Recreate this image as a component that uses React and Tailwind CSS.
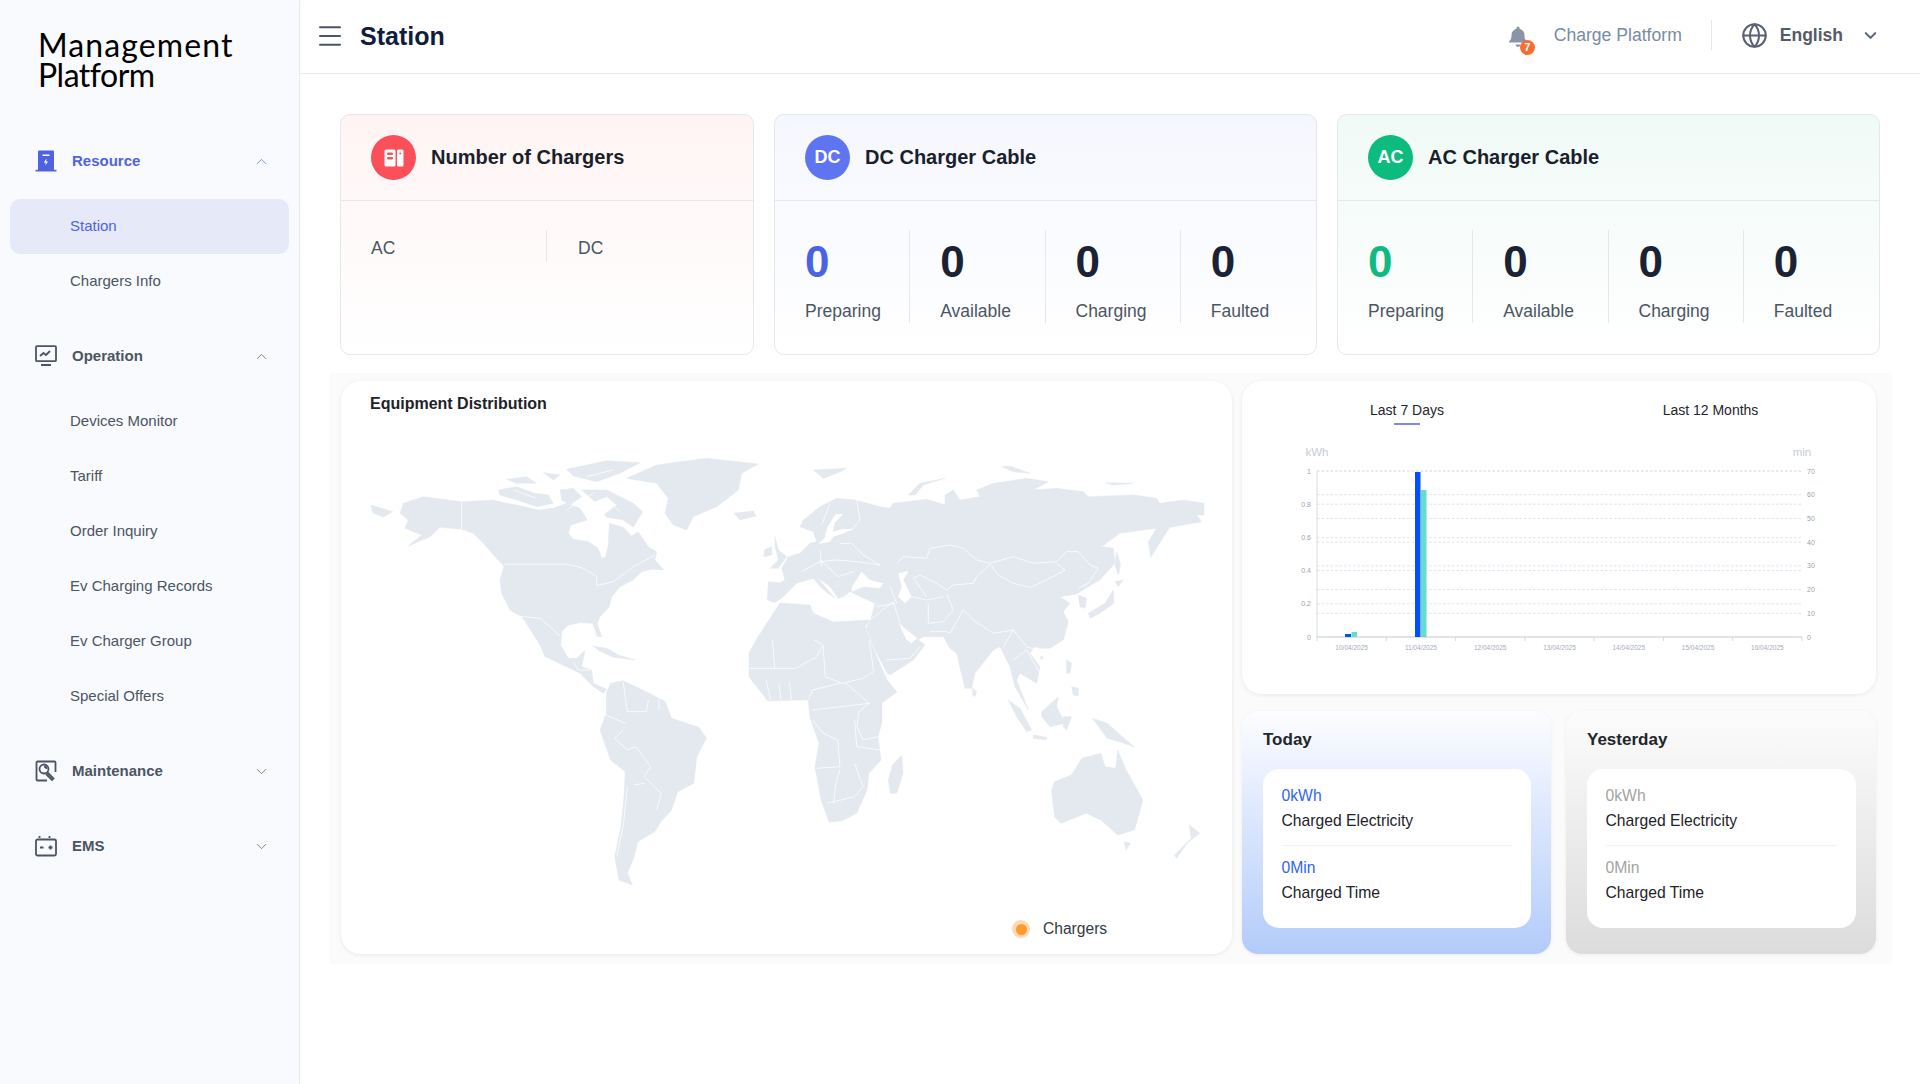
import React from 'react';
import { ChevronUp, ChevronDown, Globe, Menu } from 'lucide-react';

const sans = "font-['Liberation_Sans',Arial,sans-serif]";

const ResourceIcon = () => (
  <svg width="22" height="22" viewBox="0 0 22 22">
    <path d="M3 1.5a1 1 0 0 1 1-1h14a1 1 0 0 1 1 1V20H3z" fill="#4f62e0" />
    <rect x="0.5" y="19.8" width="21" height="1.7" fill="#4f62e0" />
    <rect x="7.5" y="4.5" width="7" height="1.5" fill="#fff" />
    <path d="M11.6 8.5 8.8 12.6h2l-.6 3 2.9-4.2h-2z" fill="#fff" />
  </svg>
);

const OperationIcon = () => (
  <svg width="22" height="22" viewBox="0 0 22 22" fill="none" stroke="#4b5563" strokeWidth="1.8">
    <rect x="1" y="1.2" width="20" height="15" rx="1" />
    <path d="M5 11l3.5-3 2.5 2 4-4" />
    <path d="M6 20h10" strokeWidth="2" />
  </svg>
);

const MaintenanceIcon = () => (
  <svg width="22" height="22" viewBox="0 0 22 22" fill="none" stroke="#4b5563" strokeWidth="1.8">
    <path d="M12 20.5H2.5a1 1 0 0 1-1-1v-17a1 1 0 0 1 1-1h17a1 1 0 0 1 1 1V12" />
    <circle cx="9" cy="9" r="4.5" />
    <path d="M9 6.5a2.5 2.5 0 0 1 2.5 2.5M12.5 12.5l6 6-1.5 1.5-6-6" />
  </svg>
);

const EmsIcon = () => (
  <svg width="22" height="22" viewBox="0 0 22 22" fill="none" stroke="#4b5563" strokeWidth="1.8">
    <rect x="1" y="4.5" width="20" height="16" rx="1.5" />
    <path d="M4.5 1v2M14.5 1v2M5 12.5h3.5M13.5 12.5h4M15.5 10.5v4" />
  </svg>
);

const menu = [
  {
    title: 'Resource',
    Icon: ResourceIcon,
    open: true,
    active: true,
    items: ['Station', 'Chargers Info'],
  },
  {
    title: 'Operation',
    Icon: OperationIcon,
    open: true,
    items: ['Devices Monitor', 'Tariff', 'Order Inquiry', 'Ev Charging Records', 'Ev Charger Group', 'Special Offers'],
  },
  { title: 'Maintenance', Icon: MaintenanceIcon, items: [] },
  { title: 'EMS', Icon: EmsIcon, items: [] },
];

const Sidebar = () => (
  <aside className="w-[300px] shrink-0 bg-[#f9fafd] border-r border-[#ececf0] shadow-[1px_0_2px_rgba(0,0,0,0.03)]">
    <div className="h-[136px] pt-[30px] pl-[38px] font-['Lato',sans-serif] text-[32px] leading-[30px] text-black">
      <div className="tracking-[1.1px]">Management</div>
      <div className="tracking-[-0.5px]">Platform</div>
    </div>
    {menu.map(({ title, Icon, open, active, items }) => (
      <div key={title} className={items.length > 0 ? 'mb-[22px]' : 'mb-[25px]'}>
        <div className="h-[50px] flex items-center pl-[35px] pr-[29px]">
          <Icon />
          <span className={`ml-[15px] flex-1 text-[15px] font-bold ${active ? 'text-[#4f62e0]' : 'text-[#4b5563]'}`}>
            {title}
          </span>
          {open ? (
            <ChevronUp size={17} strokeWidth={1} className={active ? 'text-[#4f62e0]' : 'text-[#4b5563]'} />
          ) : (
            <ChevronDown size={17} strokeWidth={1} className="text-[#4b5563]" />
          )}
        </div>
        {items.length > 0 && (
          <div className="mt-[13px] mx-[10px]">
            {items.map((item) => (
              <div
                key={item}
                className={`h-[55px] flex items-center pl-[60px] rounded-[10px] text-[15px] ${
                  item === 'Station' ? 'bg-[#e6e9f8] text-[#4f62e0]' : 'text-[#4b5563]'
                }`}
              >
                {item}
              </div>
            ))}
          </div>
        )}
      </div>
    ))}
  </aside>
);

const Header = () => (
  <header className="h-[74px] border-b border-[#e5e7eb] flex items-center pl-[15px] pr-[40px]">
    <Menu size={30} strokeWidth={1.6} className="mb-[2px] text-[#4b5563]" />
    <h1 className="ml-[15px] text-[25px] font-bold text-[#101c3d]">Station</h1>
    <div className="ml-auto relative">
      <svg width="20" height="22" viewBox="0 0 20 22" fill="#8a94a6">
        <path d="M10 0.5a1.6 1.6 0 0 1 1.6 1.6v.6c3.2.8 4.9 3.4 4.9 6.6 0 3.4.8 4.8 2.5 6.2v1H1v-1c1.7-1.4 2.5-2.8 2.5-6.2 0-3.2 1.7-5.8 4.9-6.6v-.6A1.6 1.6 0 0 1 10 .5zM7.6 18.5h4.8a2.4 2.4 0 0 1-4.8 0z" />
      </svg>
      <span className="absolute left-[12px] top-[14px] w-[15px] h-[15px] rounded-full bg-[#f56f33] text-white text-[11px] font-bold leading-[15px] text-center">
        7
      </span>
    </div>
    <span className="ml-[26px] mb-[2px] text-[17.6px] text-[#7a8ba3]">Charge Platform</span>
    <div className="ml-[29px] mb-[3px] w-px h-[30px] bg-[#e5e7eb]" />
    <Globe size={27} strokeWidth={1.8} className="ml-[29px] mb-[3px] text-[#566274]" />
    <span className="ml-[12px] mb-[3px] text-[17.5px] font-bold text-[#555b66]">English</span>
    <ChevronDown size={19} strokeWidth={2.6} className="ml-[18px] mb-[3px] text-[#566274]" />
  </header>
);

const Stat = ({ label, color, last }) => (
  <div className={`pl-[30px] h-[93px] ${last ? '' : 'border-r border-[#e5e7eb]'}`}>
    <div className={`text-[44px] font-bold leading-[44px] mt-[10px] ${color}`}>0</div>
    <div className="mt-[17px] text-[17.5px] leading-[20px] text-[#4b5563]">{label}</div>
  </div>
);

const CableCard = ({ title, badge, badgeColor, gradient, color }) => (
  <div className={`rounded-[10px] border border-[#e5e7eb] ${gradient}`}>
    <div className="h-[86px] border-b border-[#e5e7eb] flex items-center pl-[30px]">
      <div className={`w-[45px] h-[45px] rounded-full flex items-center justify-center text-white font-bold text-[18px] ${badgeColor}`}>
        {badge}
      </div>
      <span className="ml-[15px] mb-[2px] text-[20px] font-bold text-[#1a1f2b]">{title}</span>
    </div>
    <div className="grid grid-cols-4 mt-[29px]">
      <Stat label="Preparing" color={color} />
      <Stat label="Available" color="text-[#1a2233]" />
      <Stat label="Charging" color="text-[#1a2233]" />
      <Stat label="Faulted" color="text-[#1a2233]" last />
    </div>
  </div>
);

// land shapes, traced in three local frames that line up with the map area
const Land = ({ d }) => <path d={d} fill="#e3e9ef" stroke="#e3e9ef" strokeWidth="0.5" vectorEffect="non-scaling-stroke" />;
const Gap = ({ d }) => <path d={d} fill="#fff" />;
const Line = ({ d }) => (
  <path d={d} fill="none" stroke="#fff" strokeWidth="0.9" strokeOpacity="0.85" strokeLinejoin="round" vectorEffect="non-scaling-stroke" />
);

const WorldMap = () => (
  <svg viewBox="341 440 891 460" className="block w-[891px] h-[460px]">
    <g transform="translate(340 440) scale(0.3333)">
      <Land d="M92 195 L125 205 L158 215 L130 232 L98 218 Z" />
      <Land d="M190 190 L250 170 L365 185 L460 180 L500 190 L545 198 L595 210 L640 205 L680 190 L720 205 L742 240 L692 255 L685 280 L700 298 L745 305 L775 325 L785 355 L797 350 L805 315 L808 250 L850 262 L875 288 L895 275 L925 320 L950 335 L945 360 L972 390 L935 388 L905 395 L880 420 L840 440 L815 470 L808 500 L780 530 L772 550 L785 590 L772 590 L758 550 L720 548 L685 555 L665 575 L662 615 L685 655 L710 655 L735 632 L725 680 L755 690 L760 730 L800 748 L790 760 L760 740 L720 700 L680 680 L615 650 L600 615 L575 575 L545 530 L510 510 L485 460 L480 420 L492 378 L465 350 L430 310 L400 280 L365 268 L300 262 L270 290 L205 318 L245 285 L195 265 L205 240 L180 220 Z" />
      <Land d="M475 150 L530 140 L585 160 L625 165 L640 190 L590 200 L530 180 L480 165 Z" />
      <Land d="M660 150 L700 145 L725 170 L690 195 L665 180 Z" />
      <Land d="M725 150 L800 150 L880 190 L908 215 L880 262 L850 240 L800 232 L770 190 Z" />
      <Land d="M680 88 L800 62 L900 68 L840 100 L770 125 L700 108 Z" />
      <Land d="M500 118 L560 110 L590 130 L530 130 Z" />
      <Land d="M610 98 L660 105 L640 120 Z" />
      <Land d="M860 115 L950 75 L1100 55 L1255 72 L1205 100 L1195 150 L1130 200 L1060 230 L1040 270 L1000 255 L975 220 L985 175 L950 130 Z" />
      <Land d="M1182 220 L1240 213 L1248 228 L1200 240 Z" />
      <Land d="M758 618 L800 625 L835 645 L885 660 L820 652 L780 634 Z" />
      <Gap d="M543 530 L555 545 L582 615 L570 600 L548 560 Z" />
      <Gap d="M540 130 L600 135 L640 150 M740 195 L800 170 L830 195 L790 225 L760 210 Z" />
      <Line d="M543 530 L560 580 L585 618" />
      <Line d="M365 185 L365 268" />
      <Line d="M492 373 L685 373 L730 385 L770 410 L770 437 L820 425 L880 380 L945 345" />
      <Line d="M535 528 L600 535 L630 560 L660 588" />
      <Line d="M700 665 L715 690 L750 690" />
      <Line d="M520 150 L590 175 M680 210 L760 160 M800 180 L840 215 M740 110 L820 90" />
    </g>
    <g transform="translate(780 440) scale(0.3333)">
      <Land d="M-15 488 L-38 480 L-35 425 L0 428 L15 420 L5 385 L25 350 L60 340 L90 310 L110 305 L100 275 L60 260 L70 240 L120 200 L170 175 L225 180 L300 200 L330 205 L340 190 L440 178 L495 195 L495 165 L520 150 L540 180 L600 170 L590 150 L640 130 L740 115 L805 125 L760 150 L830 145 L910 155 L925 170 L1060 165 L1130 175 L1140 190 L1210 180 L1272 190 L1272 225 L1250 225 L1265 245 L1170 262 L1145 300 L1112 352 L1105 305 L1130 265 L1090 270 L1020 280 L965 320 L1000 325 L1005 370 L960 420 L925 440 L890 462 L840 470 L870 490 L850 515 L865 545 L850 600 L810 625 L780 625 L765 620 L750 640 L780 680 L770 730 L745 715 L720 700 L710 720 L745 810 L705 740 L690 680 L660 620 L640 630 L585 700 L575 745 L555 745 L530 640 L510 625 L490 590 L430 590 L415 600 L435 615 L400 660 L330 705 L322 700 L290 640 L258 565 L272 540 L285 490 L210 455 L190 470 L175 475 L150 440 L110 410 L165 475 L125 445 L100 415 L50 430 L10 470 Z" />
      <Gap d="M168 222 L190 222 L165 248 L158 275 L185 268 L222 266 L190 280 L160 290 L150 305 L115 312 L135 292 L143 258 Z" />
      <Gap d="M215 442 L245 395 L270 420 L310 430 L300 445 L250 440 L215 455 Z" />
      <Gap d="M355 400 L385 393 L370 420 L395 470 L375 490 L355 470 L365 440 Z" />
      <Gap d="M358 550 L380 570 L412 595 L395 610 L380 600 L365 570 Z" />
      <Land d="M-15 290 L-5 330 L20 350 L-5 385 L-30 385 L-5 360 L-15 320 Z" />
      <Land d="M-47 330 L-25 320 L-25 345 L-48 350 Z" />
      <Land d="M100 90 L200 85 L170 100 L130 115 Z" />
      <Land d="M385 165 L420 130 L495 115 L430 135 L405 165 Z" />
      <Land d="M665 80 L690 78 L750 100 L700 95 Z" />
      <Land d="M975 128 L1060 130 L1000 135 Z" />
      <Land d="M1010 335 L1022 375 L1015 405 L1005 375 Z" />
      <Land d="M1005 425 L1030 420 L1015 440 Z" />
      <Land d="M1000 450 L1002 490 L960 520 L930 535 L925 520 L975 490 Z" />
      <Land d="M895 465 L920 475 L915 505 L900 500 Z" />
      <Land d="M780 650 L790 650 L785 660 Z" />
      <Land d="M578 745 L590 755 L585 770 L578 765 Z" />
      <Land d="M860 660 L875 670 L870 700 L860 700 Z" />
      <Land d="M875 740 L895 745 L895 768 L880 765 Z" />
      <Land d="M685 780 L720 805 L755 870 L740 875 L710 830 Z" />
      <Land d="M835 770 L830 800 L855 850 L810 860 L785 830 L785 815 Z" />
      <Land d="M850 830 L875 830 L860 870 L850 860 Z" />
      <Land d="M760 885 L800 892 L800 900 L760 895 Z" />
      <Line d="M350 370 L370 350 L440 355 L450 325 L510 315 L550 325 L590 360 L630 370 L700 350 L760 370 L830 365 L860 335 L895 335 L930 375 L955 385 L925 430 L895 445" />
      <Line d="M630 372 L655 405 L700 430 L750 442 L800 420 L855 390 L830 370" />
      <Line d="M630 372 L590 410 L580 430 L520 435 L500 450 L470 430 L420 405 L400 415" />
      <Line d="M395 470 L440 480 L490 470" />
      <Line d="M445 490 L445 550 L490 545 L520 510 L500 460" />
      <Line d="M450 575 L500 575 L510 580 L550 510 L580 540 L640 580 L700 570" />
      <Line d="M270 540 L340 485 L360 550 M290 500 L345 490 M320 660 L390 655 L420 620" />
      <Line d="M65 395 L120 365 L170 360 L230 365 L300 375 M120 330 L125 380 M120 360 L175 410 L220 395" />
      <Line d="M180 310 L215 310 L250 345 L300 375 M125 255 L150 190 M230 180 L240 240 L215 270" />
      <Line d="M670 620 L700 570 L740 620 L770 630 M700 660 L740 630 L780 700" />
      <Line d="M330 440 L350 490 M400 415 L440 470" />
    </g>
    <Land d="M780 603 L810 605 L813 613 L833 622 L870 620 L865 627 L877 657 L887 680 L897 692 L882 703 L882 722 L878 737 L881 760 L869 773 L867 790 L857 813 L842 821 L829 822 L821 800 L815 767 L819 743 L810 718 L808 700 L800 700 L768 701 L749 677 L749 653 L756 640 Z" />
    <g transform="translate(560 640) scale(0.4209 0.3333)">
      <Land d="M120 130 L150 122 L205 155 L250 185 L265 235 L330 262 L348 295 L325 350 L318 430 L280 455 L265 510 L240 545 L225 575 L185 605 L175 655 L160 700 L172 735 L140 720 L130 650 L145 560 L152 470 L155 395 L120 360 L95 270 L110 220 L110 160 Z" />
      <Land d="M812 345 L815 400 L800 460 L785 460 L780 420 L790 375 Z" />
      <Land d="M1175 425 L1215 405 L1240 355 L1285 340 L1295 380 L1320 385 L1325 330 L1345 390 L1385 480 L1365 570 L1325 585 L1285 540 L1250 520 L1190 550 L1175 530 L1168 450 Z" />
      <Land d="M1340 605 L1355 610 L1345 630 Z" />
      <Land d="M1495 555 L1520 580 L1490 610 L1465 655 L1460 645 L1500 595 Z" />
      <Land d="M1265 235 L1300 250 L1365 322 L1340 310 L1300 295 L1280 260 Z" />
      <Line d="M150 125 L160 215 L205 215 L210 180 M235 175 L235 210 M100 220 L155 250" />
      <Line d="M150 270 L130 295 L160 330 L180 320 L215 380 L200 410 L240 460 L230 510 M160 440 L150 560 L135 650 M175 435 L200 430" />
      <Line d="M505 0 L510 85 M450 85 L560 85 L610 50 L625 15 L605 0 M625 15 L630 110 L670 130 L720 115 L745 95 L735 0" />
      <Line d="M590 180 L600 150 L665 130 M600 210 L735 190 L680 130 M600 240 L625 280 L660 300 L665 380 L610 385" />
      <Line d="M700 240 L705 320 L760 330 M665 390 L655 430 L650 490 M700 370 L720 440 L700 470 L635 490" />
      <Line d="M735 190 L710 215 L705 260 L720 300 L755 290 M520 130 L525 180 M545 125 L550 180 M490 120 L500 180" />
    </g>
  </svg>
);

const leftTicks = ['1', '0.8', '0.6', '0.4', '0.2', '0'];
const rightTicks = ['70', '60', '50', '40', '30', '20', '10', '0'];
const dates = ['10/04/2025', '11/04/2025', '12/04/2025', '13/04/2025', '14/04/2025', '15/04/2025', '16/04/2025'];

const Chart = () => {
  const top = 471;
  const bottom = 637;
  const left = 1317;
  const right = 1802;
  const day = (right - left) / 7;
  return (
    <svg viewBox="1242 440 634 220" className="block w-[634px] h-[220px] font-['Liberation_Sans',sans-serif]">
      <text x="1317" y="456" fontSize="11.5" fill="#c6ccd8" textAnchor="middle">kWh</text>
      <text x="1802" y="456" fontSize="11.5" fill="#c6ccd8" textAnchor="middle">min</text>
      {leftTicks.map((t, i) => {
        const y = top + (i * (bottom - top)) / 5;
        return (
          <g key={t}>
            {i < 5 && <line x1={left} x2={right} y1={y} y2={y} stroke="#dfe3f0" strokeDasharray="2.5 2" />}
            <text x="1311" y={y + 2.5} fontSize="7" fill="#9aa3b2" textAnchor="end">{t}</text>
          </g>
        );
      })}
      {rightTicks.map((t, i) => {
        const y = top + (i * (bottom - top)) / 7;
        return (
          <g key={t}>
            {i < 7 && <line x1={left} x2={right} y1={y} y2={y} stroke="#dfe3f0" strokeDasharray="2.5 2" />}
            <text x="1807" y={y + 2.5} fontSize="7" fill="#9aa3b2">{t}</text>
          </g>
        );
      })}
      <line x1={left} x2={left} y1={top} y2={bottom} stroke="#d5dae6" />
      <line x1={left} x2={right} y1={bottom} y2={bottom} stroke="#d5dae6" strokeWidth="1.4" />
      {dates.map((d, i) => (
        <g key={d}>
          <line x1={left + i * day} x2={left + i * day} y1={bottom} y2={bottom + 4} stroke="#d5dae6" />
          <text x={left + (i + 0.5) * day} y="650" fontSize="6.5" fill="#a6adba" textAnchor="middle">{d}</text>
        </g>
      ))}
      <line x1={right} x2={right} y1={bottom} y2={bottom + 4} stroke="#d5dae6" />
      <rect x="1345" y="634" width="6" height="3" fill="#0050ff" />
      <rect x="1351.5" y="632" width="5.5" height="5" fill="#64dcd0" />
      <rect x="1415" y="472" width="5.5" height="165" fill="#0050ff" />
      <rect x="1421" y="490" width="5.5" height="147" fill="#64dcd0" />
    </svg>
  );
};

const Summary = ({ title, gradient, color }) => (
  <div className={`rounded-[16px] shadow-[0_1px_4px_rgba(0,0,0,0.06)] pl-[21px] pr-[20px] pt-[17px] ${gradient}`}>
    <div className="text-[17px] font-bold leading-[24px] text-[#22252b]">{title}</div>
    <div className="mt-[17px] -ml-[0.5px] h-[159px] rounded-[16px] bg-white px-[19px] pt-[18px] text-[15.7px] leading-[18px]">
      <div className={color}>0kWh</div>
      <div className="mt-[7px] text-[#1e222a]">Charged Electricity</div>
      <div className="mt-[15px] border-t border-[#f1f2f4] pt-[14px]" />
      <div className={`-mt-[1px] ${color}`}>0Min</div>
      <div className="mt-[7px] text-[#1e222a]">Charged Time</div>
    </div>
  </div>
);

export default function App() {
  return (
    <div className={`flex w-full h-[1084px] overflow-hidden bg-white ${sans}`}>
      <Sidebar />
      <main className="flex-1 min-w-0">
        <Header />
        <section className="mt-[40px] mx-[40px] h-[241px] grid grid-cols-[414px_543px_543px] gap-[20px]">
          <div className="rounded-[10px] border border-[#e5e7eb] bg-linear-to-b from-[#fff4f4] to-white">
            <div className="h-[86px] border-b border-[#e5e7eb] flex items-center pl-[30px]">
              <div className="w-[45px] h-[45px] rounded-full bg-[#fb5059] flex items-center justify-center">
                <svg width="20" height="20" viewBox="0 0 20 20">
                  <rect x="0.5" y="1.5" width="11" height="17" rx="1.5" fill="#fff" />
                  <rect x="13" y="1.5" width="6.5" height="17" rx="1.5" fill="#fff" />
                  <rect x="3" y="4.5" width="6" height="2.5" rx="1" fill="#fb5059" />
                  <rect x="3" y="9" width="6" height="2.5" rx="1" fill="#fb5059" />
                  <circle cx="16.2" cy="5.5" r="1" fill="#fb5059" />
                </svg>
              </div>
              <span className="ml-[15px] mb-[2px] text-[20px] font-bold text-[#1a1f2b]">Number of Chargers</span>
            </div>
            <div className="grid grid-cols-2 mt-[29px] text-[17.5px] leading-[36px] text-[#4b5563]">
              <div className="h-[32px] pl-[30px] border-r border-[#e5e7eb]">AC</div>
              <div className="h-[32px] pl-[31px]">DC</div>
            </div>
          </div>
          <CableCard
            title="DC Charger Cable"
            badge="DC"
            badgeColor="bg-[#5f74f1]"
            gradient="bg-linear-to-b from-[#f5f7fe] to-white"
            color="text-[#4a63e3]"
          />
          <CableCard
            title="AC Charger Cable"
            badge="AC"
            badgeColor="bg-[#0dbb7f]"
            gradient="bg-linear-to-b from-[#f0faf6] to-white"
            color="text-[#10b981]"
          />
        </section>
        <section className="mt-[18px] ml-[30px] w-[1562px] bg-[#fbfbfb] pl-[11px] pt-[8px] pb-[10px] flex gap-[10px]">
          <div className="w-[891px] h-[573px] rounded-[20px] bg-white shadow-[0_1px_4px_rgba(0,0,0,0.08)]">
            <div className="h-[59px] pl-[29px] pt-[13px] text-[16px] font-bold leading-[20px] text-[#1e222a]">
              Equipment Distribution
            </div>
            <WorldMap />
            <div className="mt-[19px] pl-[671px] flex items-center gap-[13px] text-[15.6px] leading-[20px] text-[#333a46]">
              <span className="w-[18px] h-[18px] rounded-full bg-[#fdd9b5] flex items-center justify-center">
                <span className="w-[11px] h-[11px] rounded-full bg-[#ff9a2e]" />
              </span>
              Chargers
            </div>
          </div>
          <div className="w-[634px]">
            <div className="h-[313px] rounded-[20px] bg-white shadow-[0_1px_4px_rgba(0,0,0,0.08)]">
              <div className="h-[59px] flex text-[14px] text-[#22252b]">
                <div className="w-[330px] flex flex-col items-center pt-[21px]">
                  <span className="leading-[16px]">Last 7 Days</span>
                  <span className="mt-[5px] w-[26px] h-[2px] bg-[#7c8ae6]" />
                </div>
                <div className="w-[277px] text-center pt-[21px] leading-[16px]">Last 12 Months</div>
              </div>
              <Chart />
            </div>
            <div className="mt-[17px] h-[243px] grid grid-cols-[309px_310px] gap-[15px]">
              <Summary title="Today" gradient="bg-linear-to-b from-[#fdfdff] to-[#b3cbfa]" color="text-[#2f66f6]" />
              <Summary title="Yesterday" gradient="bg-linear-to-b from-[#fcfcfc] to-[#dcdcdc]" color="text-[#a3a3a3]" />
            </div>
          </div>
        </section>
      </main>
    </div>
  );
}
